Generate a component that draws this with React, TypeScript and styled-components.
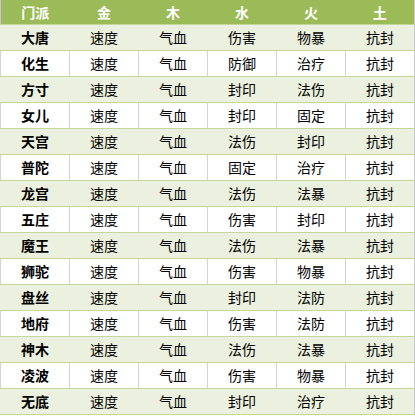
import styled, { createGlobalStyle } from "styled-components";

const GlobalStyle = createGlobalStyle`
  html, body {
    margin: 0;
    padding: 0;
    background: #ffffff;
  }
`;

const rows: string[][] = [
  ["大唐", "速度", "气血", "伤害", "物暴", "抗封"],
  ["化生", "速度", "气血", "防御", "治疗", "抗封"],
  ["方寸", "速度", "气血", "封印", "法伤", "抗封"],
  ["女儿", "速度", "气血", "封印", "固定", "抗封"],
  ["天宫", "速度", "气血", "法伤", "封印", "抗封"],
  ["普陀", "速度", "气血", "固定", "治疗", "抗封"],
  ["龙宫", "速度", "气血", "法伤", "法暴", "抗封"],
  ["五庄", "速度", "气血", "伤害", "封印", "抗封"],
  ["魔王", "速度", "气血", "法伤", "法暴", "抗封"],
  ["狮驼", "速度", "气血", "伤害", "物暴", "抗封"],
  ["盘丝", "速度", "气血", "封印", "法防", "抗封"],
  ["地府", "速度", "气血", "伤害", "法防", "抗封"],
  ["神木", "速度", "气血", "法伤", "法暴", "抗封"],
  ["凌波", "速度", "气血", "伤害", "物暴", "抗封"],
  ["无底", "速度", "气血", "封印", "治疗", "抗封"],
];

const headers = ["门派", "金", "木", "水", "火", "土"];

export default function App() {
  return (
    <>
      <GlobalStyle />
      <Table>
        <colgroup>
          {headers.map((h) => (
            <col key={h} style={{ width: `${100 / 6}%` }} />
          ))}
        </colgroup>
        <thead>
          <tr>
            {headers.map((h) => (
              <HeadCell key={h}>{h}</HeadCell>
            ))}
          </tr>
        </thead>
        <tbody>
          {rows.map((r, i) => (
            <Row key={r[0]} $striped={i % 2 === 0}>
              {r.map((c, j) => (
                <Cell key={j} $strong={j === 0}>
                  {c}
                </Cell>
              ))}
            </Row>
          ))}
        </tbody>
      </Table>
    </>
  );
}

const Table = styled.table`
  width: 415px;
  border-collapse: collapse;
  table-layout: fixed;
  font-family: "Noto Sans CJK SC", "Noto Sans", sans-serif;
  font-size: 14px;
  border-left: 1px solid #c9c9c9;
  border-right: 1px solid #c9c9c9;
`;

const HeadCell = styled.th`
  height: 24px;
  padding: 0;
  background: #9bbb59;
  color: #ffffff;
  font-weight: bold;
  text-align: center;
  line-height: 24px;
  border-bottom: 1px solid #c4d79b;
`;

const Row = styled.tr<{ $striped: boolean }>`
  background: ${({ $striped }) => ($striped ? "#ebf1de" : "#ffffff")};

  td {
    border-left: 1px solid
      ${({ $striped }) => ($striped ? "#ebf1de" : "#d4d4d4")};
  }
`;

const Cell = styled.td<{ $strong: boolean }>`
  height: 25px;
  padding: 0;
  text-align: center;
  line-height: 25px;
  color: #000000;
  font-weight: ${({ $strong }) => ($strong ? "bold" : "normal")};
  border-bottom: 1px solid #c4d79b;
`;
